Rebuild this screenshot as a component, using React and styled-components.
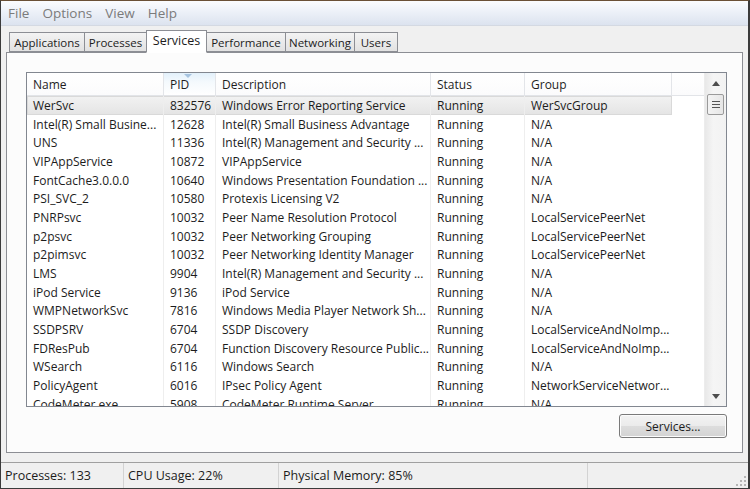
import React from "react";
import styled, { createGlobalStyle, css } from "styled-components";

const Global = createGlobalStyle`
  html, body { margin: 0; padding: 0; background: #fff; overflow: hidden; }
  * { box-sizing: border-box; }
`;

const FONT = `"Open Sans", "Noto Sans", "Liberation Sans", sans-serif`;

const Window = styled.div`
  width: 750px;
  height: 489px;
  border: 1px solid #3b3b3b;
  border-top-color: #6a5036;
  border-right-width: 2px;
  background: #f0f0f0;
  display: flex;
  flex-direction: column;
  font-family: ${FONT};
  font-size: 11.5px;
  color: #1c1c1c;
  overflow: hidden;
`;

const MenuBar = styled.div`
  height: 25px;
  display: flex;
  align-items: center;
  gap: 13px;
  padding-left: 7px;
  background: linear-gradient(#fbfcfe 0%, #eef2f9 40%, #dce3ef 100%);
  border-bottom: 1px solid #d4d9e2;
  flex-shrink: 0;
`;

const MenuItem = styled.span`
  font-size: 13.5px;
  color: #7b7b7b;
`;

const TabStrip = styled.div`
  display: flex;
  align-items: flex-end;
  height: 26px;
  padding-left: 9px;
  flex-shrink: 0;
`;

const Tab = styled.div`
  height: 20px;
  width: ${(p) => p.$w}px;
  display: flex;
  align-items: center;
  justify-content: center;
  border: 1px solid #8c8e94;
  margin-left: -1px;
  background: linear-gradient(#f3f3f3, #e2e2e2);
  font-size: 11.5px;
  white-space: nowrap;
  ${(p) =>
    p.$active &&
    css`
      height: 23px;
      background: #fff;
      border-bottom-color: #fff;
      position: relative;
      z-index: 1;
      margin-bottom: -1px;
      padding-bottom: 3px;
      font-size: 12.5px;
    `}
`;

const TabPage = styled.div`
  margin: 0 5px 0 5px;
  height: 401px;
  border: 1px solid #8c8e94;
  background: #fcfcfc;
  padding: 19px 15px 0 19px;
  display: flex;
  flex-direction: column;
  flex-shrink: 0;
`;

const ListView = styled.div`
  height: 335px;
  border: 1px solid #828790;
  background: #fff;
  display: flex;
  overflow: hidden;
`;

const ListMain = styled.div`
  flex: 1;
  display: flex;
  flex-direction: column;
  overflow: hidden;
`;

const COLS = "137px 52px 215px 94px 147px";

const Header = styled.div`
  display: grid;
  grid-template-columns: ${COLS} 1fr;
  height: 23px;
  flex-shrink: 0;
  border-bottom: 1px solid #e2e4e8;
`;

const HeaderCell = styled.div`
  position: relative;
  display: flex;
  align-items: center;
  padding-left: 6px;
  border-right: 1px solid #e3e5e9;
  background: ${(p) =>
    p.$sorted
      ? "linear-gradient(#e3f1fb 0%, #f4f9fd 40%, #fff 100%)"
      : "linear-gradient(#fff, #fbfbfc)"};
  font-size: 12px;
  color: #1e1e1e;
  &:last-child { border-right: none; }
`;

const SortArrow = styled.span`
  position: absolute;
  top: 1px;
  left: 20px;
  width: 0;
  height: 0;
  border-left: 4px solid transparent;
  border-right: 4px solid transparent;
  border-top: 4px solid #a6c3df;
`;

const Body = styled.div`
  flex: 1;
  overflow: hidden;
`;

const Row = styled.div`
  display: grid;
  grid-template-columns: ${COLS};
  width: 645px;
  height: 18.7px;
  ${(p) =>
    p.$selected &&
    css`
      background: linear-gradient(#f2f2f2, #e4e4e4);
      box-shadow: inset 0 0 0 1px #d9d9d9;
    `}
`;

const Cell = styled.div`
  padding-left: 6px;
  display: flex;
  align-items: center;
  white-space: nowrap;
  overflow: hidden;
  border-right: 1px solid #eeeeee;
  font-size: 12px;
  color: #1c1c1c;
  &:last-child { border-right: none; }
`;

const ScrollBar = styled.div`
  width: 22px;
  display: flex;
  flex-direction: column;
  background: linear-gradient(90deg, #e8e8e8, #f5f5f5 40%, #f2f2f2);
  border-left: 1px solid #ececec;
  flex-shrink: 0;
`;

const ScrollArrow = styled.div`
  height: 20px;
  display: flex;
  align-items: center;
  justify-content: center;
  flex-shrink: 0;
`;

const ScrollTrack = styled.div`
  flex: 1;
  padding: 1px 2px;
`;

const Thumb = styled.div`
  height: 21px;
  border: 1px solid #9a9a9a;
  border-radius: 2px;
  background: linear-gradient(90deg, #f3f3f3, #e6e6e6);
  display: flex;
  align-items: center;
  justify-content: center;
`;

const ButtonRow = styled.div`
  display: flex;
  justify-content: flex-end;
  margin-top: 7px;
`;

const Button = styled.button`
  width: 108px;
  height: 24px;
  border: 1px solid #7a7a7a;
  border-radius: 3px;
  background: linear-gradient(#f3f3f3 0%, #ebebeb 50%, #dddddd 51%, #d3d3d3 100%);
  font-family: ${FONT};
  font-size: 12px;
  color: #1c1c1c;
  padding: 0;
  box-shadow: inset 0 0 0 1px #fcfcfc;
`;

const StatusBar = styled.div`
  margin-top: 9px;
  flex: 1;
  display: flex;
  align-items: center;
  border-top: 1px solid #a0a0a0;
  position: relative;
`;

const StatusPane = styled.div`
  width: ${(p) => p.$w}px;
  height: 100%;
  display: flex;
  align-items: center;
  padding-left: 4px;
  border-right: 1px solid #d3d3d3;
  font-size: 12.5px;
  color: #1c1c1c;
  flex-shrink: 0;
`;

const Grip = styled.svg`
  position: absolute;
  right: 1px;
  bottom: 1px;
`;

const rows = [
  ["WerSvc", "832576", "Windows Error Reporting Service", "Running", "WerSvcGroup"],
  ["Intel(R) Small Busine...", "12628", "Intel(R) Small Business Advantage", "Running", "N/A"],
  ["UNS", "11336", "Intel(R) Management and Security ...", "Running", "N/A"],
  ["VIPAppService", "10872", "VIPAppService", "Running", "N/A"],
  ["FontCache3.0.0.0", "10640", "Windows Presentation Foundation ...", "Running", "N/A"],
  ["PSI_SVC_2", "10580", "Protexis Licensing V2", "Running", "N/A"],
  ["PNRPsvc", "10032", "Peer Name Resolution Protocol", "Running", "LocalServicePeerNet"],
  ["p2psvc", "10032", "Peer Networking Grouping", "Running", "LocalServicePeerNet"],
  ["p2pimsvc", "10032", "Peer Networking Identity Manager", "Running", "LocalServicePeerNet"],
  ["LMS", "9904", "Intel(R) Management and Security ...", "Running", "N/A"],
  ["iPod Service", "9136", "iPod Service", "Running", "N/A"],
  ["WMPNetworkSvc", "7816", "Windows Media Player Network Sh...", "Running", "N/A"],
  ["SSDPSRV", "6704", "SSDP Discovery", "Running", "LocalServiceAndNoImp..."],
  ["FDResPub", "6704", "Function Discovery Resource Public...", "Running", "LocalServiceAndNoImp..."],
  ["WSearch", "6116", "Windows Search", "Running", "N/A"],
  ["PolicyAgent", "6016", "IPsec Policy Agent", "Running", "NetworkServiceNetwor..."],
  ["CodeMeter.exe", "5908", "CodeMeter Runtime Server", "Running", "N/A"],
];

const tabs = [
  ["Applications", 76],
  ["Processes", 63],
  ["Services", 61],
  ["Performance", 80],
  ["Networking", 70],
  ["Users", 44],
];

export default function App() {
  return (
    <>
      <Global />
      <Window>
        <MenuBar>
          <MenuItem>File</MenuItem>
          <MenuItem>Options</MenuItem>
          <MenuItem>View</MenuItem>
          <MenuItem>Help</MenuItem>
        </MenuBar>
        <TabStrip>
          {tabs.map(([t, w]) => (
            <Tab key={t} $w={w} $active={t === "Services"}>
              {t}
            </Tab>
          ))}
        </TabStrip>
        <TabPage>
          <ListView>
            <ListMain>
              <Header>
                <HeaderCell>Name</HeaderCell>
                <HeaderCell $sorted>
                  PID
                  <SortArrow />
                </HeaderCell>
                <HeaderCell>Description</HeaderCell>
                <HeaderCell>Status</HeaderCell>
                <HeaderCell>Group</HeaderCell>
                <HeaderCell />
              </Header>
              <Body>
                {rows.map((r, i) => (
                  <Row key={i} $selected={i === 0}>
                    {r.map((c, j) => (
                      <Cell key={j}>{c}</Cell>
                    ))}
                  </Row>
                ))}
              </Body>
            </ListMain>
            <ScrollBar>
              <ScrollArrow>
                <svg width="8" height="5" viewBox="0 0 8 5">
                  <path d="M0 5 L4 0 L8 5 Z" fill="#4d4d4d" />
                </svg>
              </ScrollArrow>
              <ScrollTrack>
                <Thumb>
                  <svg width="8" height="9" viewBox="0 0 8 9">
                    <path d="M0 1.5h8M0 4.5h8M0 7.5h8" stroke="#555" strokeWidth="1" />
                  </svg>
                </Thumb>
              </ScrollTrack>
              <ScrollArrow>
                <svg width="8" height="5" viewBox="0 0 8 5">
                  <path d="M0 0 L8 0 L4 5 Z" fill="#4d4d4d" />
                </svg>
              </ScrollArrow>
            </ScrollBar>
          </ListView>
          <ButtonRow>
            <Button>Services...</Button>
          </ButtonRow>
        </TabPage>
        <StatusBar>
          <StatusPane $w={123}>Processes: 133</StatusPane>
          <StatusPane $w={155}>CPU Usage: 22%</StatusPane>
          <StatusPane $w={309}>Physical Memory: 85%</StatusPane>
          <Grip width="12" height="12" viewBox="0 0 12 12">
            {[
              [9, 1], [9, 5], [5, 5], [9, 9], [5, 9], [1, 9],
            ].map(([x, y], i) => (
              <rect key={i} x={x} y={y} width="2" height="2" fill="#b5b5b5" />
            ))}
          </Grip>
        </StatusBar>
      </Window>
    </>
  );
}
